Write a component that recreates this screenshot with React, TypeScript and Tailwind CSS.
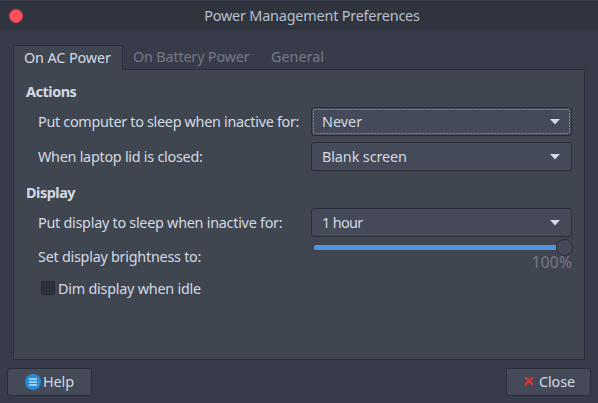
import React from "react";

function Select({ value, tracking, focused = false }: { value: string; tracking: string; focused?: boolean }) {
  return (
    <button className="relative flex h-[29px] w-[261px] shrink-0 items-center justify-between rounded-[3px] border border-[#2b2e39] bg-[#444a58] pr-[11px] pl-2.5 text-left">
      {focused && (
        <svg className="absolute top-px left-px" width="257" height="25" viewBox="0 0 257 25">
          <rect x="0.5" y="0.5" width="256" height="24" rx="1" fill="none" stroke="#838894" strokeDasharray="2 1" />
        </svg>
      )}
      <span className={tracking}>{value}</span>
      <svg width="10" height="6" viewBox="0 0 10 6"><path d="M0 0H10L5 5.5Z" fill="#d3dae3" /></svg>
    </button>
  );
}

function Row({ label, tracking, children }: { label: string; tracking: string; children: React.ReactNode }) {
  return (
    <div className="flex h-[29px] items-center justify-between pl-3">
      <span className={tracking}>{label}</span>
      {children}
    </div>
  );
}

export default function App() {
  return (
    <div className="flex h-[403px] w-[598px] flex-col overflow-hidden bg-[#383c4a] font-['Noto_Sans',sans-serif] text-[14.4px] leading-5 whitespace-nowrap text-[#d3dae3]">
      <header className="mt-px flex h-[29px] shrink-0 items-center bg-[#2f343f] pl-[9px]">
        <span className="size-3.5 rounded-full border border-[#e0424f] bg-[#f9515b]" />
        <h1 className="flex-1 pl-[3px] text-center tracking-[-0.19px] text-[#b8c0cc]">Power Management Preferences</h1>
      </header>
      <nav className="mt-[15px] ml-[13px] flex h-6 shrink-0 text-[#747986]">
        <button className="z-10 h-[25px] w-[110px] rounded-t-[2px] border border-b-0 border-[#2b2e39] bg-[#404650] pl-2.5 text-left tracking-[-0.12px] text-[#d3dae3]">On AC Power</button>
        <button className="w-[138px] pl-[10px] text-left tracking-[-0.18px]">On Battery Power</button>
        <button className="pl-[10px] text-left">General</button>
      </nav>
      <main className="ml-[13px] h-[291px] w-[572px] shrink-0 border border-[#2b2e39] bg-[#404650] pt-3 pr-3 pl-3">
        <h2 className="h-[25px] font-bold tracking-[-0.45px]">Actions</h2>
        <Row label="Put computer to sleep when inactive for:" tracking="tracking-[-0.31px]"><Select value="Never" tracking="tracking-normal" focused /></Row>
        <div className="h-1.5" />
        <Row label="When laptop lid is closed:" tracking="tracking-[-0.27px]"><Select value="Blank screen" tracking="tracking-[-0.1px]" /></Row>
        <h2 className="mt-3 h-[25px] font-bold tracking-[-0.45px]">Display</h2>
        <Row label="Put display to sleep when inactive for:" tracking="tracking-[-0.27px]"><Select value="1 hour" tracking="tracking-[-0.65px]" /></Row>
        <div className="flex h-[38px] justify-between pl-3">
          <span className="pt-[10px] tracking-[-0.26px]">Set display brightness to:</span>
          <div className="w-[259px] pt-[2px]">
            <div className="flex h-[17px] items-center">
              <span className="ml-px h-[5px] flex-1 rounded-l-[2px] bg-[#5294e2]" />
              <span className="-mr-px size-[17px] rounded-full border border-[#2b2e39] bg-[#444a58]" />
            </div>
            <div className="-mt-[4px] text-right text-[15.5px] tracking-[0.2px] text-[#747986]">100%</div>
          </div>
        </div>
        <label className="mt-1 flex h-5 items-center pl-[15px] tracking-[-0.24px]">
          <span className="mr-[3px] mb-[3px] size-3.5 rounded-[2px] border border-[#272a34] bg-[#2e323d]" />
          Dim display when idle
        </label>
      </main>
      <footer className="flex justify-between px-[7px] pt-2">
        <button className="flex h-7 w-[85px] items-center rounded-[3px] border border-[#2b2e39] bg-[#444a58] pl-[17px] tracking-[-0.1px]">
          <svg width="16" height="16" viewBox="0 0 16 16" className="mr-[2px] mb-px"><circle cx="8" cy="8" r="8" fill="#268bd8" /><path d="M4 4H12V6H4ZM4 7H12V9H4ZM4 10H12V12H4Z" fill="#a0cbed" /></svg>
          Help
        </button>
        <button className="flex h-7 w-[85px] items-center rounded-[3px] border border-[#2b2e39] bg-[#444a58] pl-[17px] tracking-[-0.1px]">
          <svg width="10" height="10" viewBox="0 0 10 10" className="mr-[5px] mb-[2px]"><path d="M1.3 1.3L8.7 8.7M8.7 1.3L1.3 8.7" stroke="#e03232" strokeWidth="2.3" /></svg>
          Close
        </button>
      </footer>
    </div>
  );
}
